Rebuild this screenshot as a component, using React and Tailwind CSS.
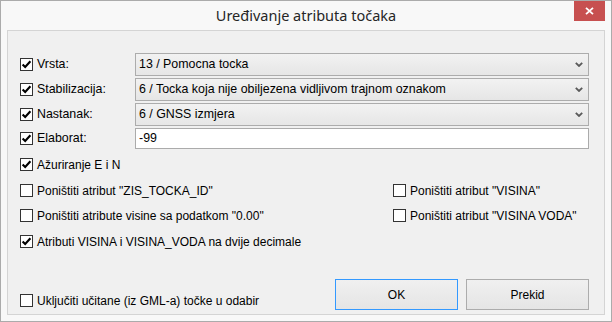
import React from "react";

const Check = ({ checked }) => (
  <span className="w-[13px] h-[13px] border border-[#333333] bg-white flex items-center justify-center shrink-0">
    {checked && (
      <svg width="11" height="11" viewBox="0 0 11 11">
        <path d="M1.6 5.4 L4.2 8 L9.4 2.2" stroke="#000" strokeWidth="2.1" fill="none" />
      </svg>
    )}
  </span>
);

const CheckRow = ({ checked, label, className = "" }) => (
  <div className={"flex items-center gap-[4px] h-[13px] " + className}>
    <Check checked={checked} />
    <span className="whitespace-nowrap">{label}</span>
  </div>
);

const Chevron = () => (
  <svg width="8" height="5" viewBox="0 0 8 5" className="mr-[5px] shrink-0">
    <path d="M0.8 0.8 L4 4 L7.2 0.8" stroke="#5a5a5a" strokeWidth="1.8" fill="none" />
  </svg>
);

const Combo = ({ value }) => (
  <div className="flex-1 h-[23px] border border-[#acacac] bg-gradient-to-b from-[#f2f2f2] to-[#e6e6e6] flex items-center justify-between pl-[3px]">
    <span className="whitespace-nowrap">{value}</span>
    <Chevron />
  </div>
);

const FieldRow = ({ label, children }) => (
  <div className="flex items-center">
    <div className="w-[115px] shrink-0 flex items-center gap-[4px]">
      <Check checked />
      <span>{label}</span>
    </div>
    {children}
  </div>
);

export default function App() {
  return (
    <div
      className="w-[612px] h-[322px] border border-[#ababab] bg-[#f8f8f8] flex flex-col text-[12px] text-black"
      style={{ fontFamily: '"Liberation Sans", Arial, sans-serif' }}
    >
      <div className="h-[29px] shrink-0 grid grid-cols-[1fr_auto_1fr]">
        <div />
        <div
          className="pt-[4px] text-[14.5px] text-[#262626]"
          style={{ fontFamily: '"Segoe UI", "Noto Sans", "Open Sans", sans-serif' }}
        >
          Uređivanje atributa točaka
        </div>
        <div className="flex justify-end pr-[6px]">
          <div className="w-[31px] h-[20px] bg-[#c75050] flex items-center justify-center">
            <svg width="9" height="8" viewBox="0 0 9 8">
              <path d="M1 0.8 L8 7.2 M8 0.8 L1 7.2" stroke="#fff" strokeWidth="1.8" fill="none" />
            </svg>
          </div>
        </div>
      </div>

      <div className="flex-1 mx-[6px] mb-[6px] border border-[#d4d4d4] bg-[#f0f0f0] flex flex-col pt-[22px] pl-[12px] pr-[15px] pb-[4px]">
        <div className="flex flex-col gap-[2px] text-[12.4px]">
          <FieldRow label="Vrsta:">
            <Combo value="13 / Pomocna tocka" />
          </FieldRow>
          <FieldRow label="Stabilizacija:">
            <Combo value="6 / Tocka koja nije obiljezena vidljivom trajnom oznakom" />
          </FieldRow>
          <FieldRow label="Nastanak:">
            <Combo value="6 / GNSS izmjera" />
          </FieldRow>
          <FieldRow label="Elaborat:">
            <div className="flex-1 h-[21px] border border-[#ababab] bg-white flex items-center pl-[3px]">
              -99
            </div>
          </FieldRow>
        </div>

        <div className="flex flex-col text-[12px]">
          <CheckRow checked label="Ažuriranje E i N" className="mt-[9px]" />
          <div className="grid grid-cols-[373px_1fr] mt-[13px]">
            <CheckRow label={'Poništiti atribut "ZIS_TOCKA_ID"'} />
            <CheckRow label={'Poništiti atribut "VISINA"'} />
          </div>
          <div className="grid grid-cols-[373px_1fr] mt-[12px]">
            <CheckRow label={'Poništiti atribute visine sa podatkom "0.00"'} />
            <CheckRow label={'Poništiti atribut "VISINA VODA"'} />
          </div>
          <CheckRow checked label="Atributi VISINA i VISINA_VODA na dvije decimale" className="mt-[13px]" />
        </div>

        <div className="mt-auto flex items-end justify-between">
          <CheckRow label="Uključiti učitane (iz GML-a) točke u odabir" className="mb-[3px]" />
          <div className="flex gap-[8px]">
            <div className="w-[123px] h-[31px] border border-[#3399ff] bg-gradient-to-b from-[#f0f0f0] to-[#e5e5e5] flex items-center justify-center">
              OK
            </div>
            <div className="w-[123px] h-[31px] border border-[#acacac] bg-gradient-to-b from-[#f0f0f0] to-[#e5e5e5] flex items-center justify-center">
              Prekid
            </div>
          </div>
        </div>
      </div>
    </div>
  );
}
